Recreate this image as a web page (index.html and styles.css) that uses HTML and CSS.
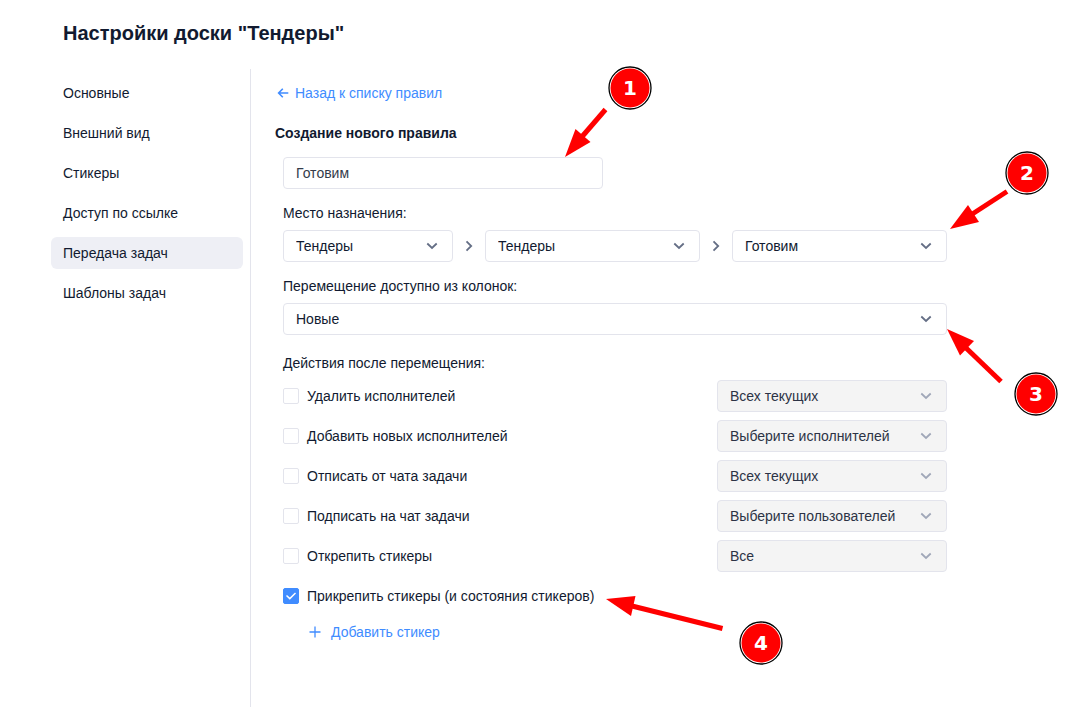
FILE: index.html
```html
<!DOCTYPE html>
<html lang="ru">
<head>
  <meta charset="UTF-8" />
  <meta name="viewport" content="width=device-width, initial-scale=1.0"/>
  <title>Настройки доски "Тендеры"</title>
  <link rel="stylesheet" href="styles.css">
</head>
<body>
  <!-- Shared icons -->
  <svg class="icons" aria-hidden="true">
    <symbol id="chevron" viewBox="0 0 12 12">
      <path d="M1.300 3.500 6 7.900l4.700-4.400" fill="none" stroke="currentColor" stroke-width="1.800"/>
    </symbol>
    <symbol id="angle" viewBox="0 0 12 12">
      <path d="M3.500 1.300 8.200 6l-4.700 4.700" fill="none" stroke="currentColor" stroke-width="1.800"/>
    </symbol>
  </svg>

  <div class="settings">
    <h1>Настройки доски "Тендеры"</h1>

    <div class="layout">
      <nav class="menu">
        <a href="#">Основные</a>
        <a href="#">Внешний вид</a>
        <a href="#">Стикеры</a>
        <a href="#">Доступ по ссылке</a>
        <a href="#" class="active">Передача задач</a>
        <a href="#">Шаблоны задач</a>
      </nav>

      <main class="content">
        <a href="#" class="back">
          <svg width="12" height="12" viewBox="0 0 12 12" fill="none" stroke="currentColor" stroke-width="1.600">
            <path d="M11.300 6H1.800M5.800 1.700 1.600 6l4.200 4.300"/>
          </svg>
          Назад к списку правил
        </a>
        <h2>Создание нового правила</h2>

        <form class="rule">
          <input type="text" class="rule-name" value="Готовим" aria-label="Название правила">

          <label class="field-label" for="project">Место назначения:</label>
          <div class="destination">
            <div class="select">
              <select id="project"><option>Тендеры</option></select>
              <svg><use href="#chevron"/></svg>
            </div>
            <svg class="separator"><use href="#angle"/></svg>
            <div class="select">
              <select aria-label="Доска"><option>Тендеры</option></select>
              <svg><use href="#chevron"/></svg>
            </div>
            <svg class="separator"><use href="#angle"/></svg>
            <div class="select">
              <select aria-label="Колонка"><option>Готовим</option></select>
              <svg><use href="#chevron"/></svg>
            </div>
          </div>

          <label class="field-label" for="source">Перемещение доступно из колонок:</label>
          <div class="select">
            <select id="source"><option>Новые</option></select>
            <svg><use href="#chevron"/></svg>
          </div>

          <p class="field-label actions-label">Действия после перемещения:</p>
          <div class="actions">
            <div class="action">
              <label><input type="checkbox">Удалить исполнителей</label>
              <div class="select">
                <select disabled aria-label="Удалить исполнителей"><option>Всех текущих</option></select>
                <svg><use href="#chevron"/></svg>
              </div>
            </div>
            <div class="action">
              <label><input type="checkbox">Добавить новых исполнителей</label>
              <div class="select">
                <select disabled aria-label="Добавить новых исполнителей"><option>Выберите исполнителей</option></select>
                <svg><use href="#chevron"/></svg>
              </div>
            </div>
            <div class="action">
              <label><input type="checkbox">Отписать от чата задачи</label>
              <div class="select">
                <select disabled aria-label="Отписать от чата задачи"><option>Всех текущих</option></select>
                <svg><use href="#chevron"/></svg>
              </div>
            </div>
            <div class="action">
              <label><input type="checkbox">Подписать на чат задачи</label>
              <div class="select">
                <select disabled aria-label="Подписать на чат задачи"><option>Выберите пользователей</option></select>
                <svg><use href="#chevron"/></svg>
              </div>
            </div>
            <div class="action">
              <label><input type="checkbox">Открепить стикеры</label>
              <div class="select">
                <select disabled aria-label="Открепить стикеры"><option>Все</option></select>
                <svg><use href="#chevron"/></svg>
              </div>
            </div>
            <div class="action">
              <label><input type="checkbox" checked>Прикрепить стикеры (и состояния стикеров)</label>
            </div>
          </div>

          <button type="button" class="add-sticker">
            <svg width="12" height="12" viewBox="0 0 12 12" fill="none" stroke="currentColor" stroke-width="1.300">
              <path d="M6 .5v11M.5 6h11"/>
            </svg>
            Добавить стикер
          </button>
        </form>
      </main>
    </div>

    <!-- Numbered callouts with arrows -->
    <svg class="callouts" width="1081" height="707" viewBox="0 0 1081 707">
      <g class="arrows">
        <path d="M605.500 109.500 580 139"/>
        <polygon points="565,157 575.500,129 590.500,142"/>
        <path d="M1007 191.500 970 215.500"/>
        <polygon points="950,229 968,205 979,222"/>
        <path d="M1001 381.500 964 346"/>
        <polygon points="947,329 960,355.500 974,341"/>
        <path d="M722.500 628.500 630 605.500"/>
        <polygon points="606,599 635.500,596 631,616"/>
      </g>
      <g class="badge">
        <circle class="ring" cx="630" cy="88" r="21"/><circle cx="630" cy="88" r="19.500"/>
        <text x="630" y="95">1</text>
      </g>
      <g class="badge">
        <circle class="ring" cx="1027" cy="173" r="21"/><circle cx="1027" cy="173" r="19.500"/>
        <text x="1027" y="180">2</text>
      </g>
      <g class="badge">
        <circle class="ring" cx="1036" cy="394" r="21"/><circle cx="1036" cy="394" r="19.500"/>
        <text x="1036" y="401">3</text>
      </g>
      <g class="badge">
        <circle class="ring" cx="761" cy="643" r="21"/><circle cx="761" cy="643" r="19.500"/>
        <text x="761" y="650">4</text>
      </g>
    </svg>
  </div>
</body>
</html>
```

FILE: styles.css
```css
* {
  box-sizing: border-box;
}

body {
  margin: 0;
  background: #fff;
  color: #111a30;
  font-family: "Liberation Sans", Arial, sans-serif;
  font-size: 14px;
  line-height: 20px;
}

a {
  color: inherit;
  text-decoration: none;
}

.icons {
  display: none;
}

.settings {
  position: relative;
  display: flex;
  flex-direction: column;
  min-height: 100vh;
  overflow: hidden;
}

h1 {
  margin: 0;
  padding: 21px 63px 24px;
  font-size: 20px;
  line-height: 24px;
}

.layout {
  display: flex;
  flex: 1;
  padding-left: 51px;
}

/* Left menu */
.menu {
  display: flex;
  flex-direction: column;
  flex: none;
  gap: 8px;
  width: 192px;
  margin-right: 7px;
  padding-top: 8px;
}

.menu a {
  padding: 6px 12px;
  border-radius: 6px;
}

.menu .active {
  background: #eeeff5;
}

/* Rule form */
.content {
  flex: 1;
  padding: 8px 24px;
  border-left: 1px solid #e3e4ec;
}

.back,
.add-sticker {
  display: flex;
  align-items: center;
  width: max-content;
  height: 32px;
  color: #408cff;
}

.back {
  gap: 6px;
  padding-left: 2px;
}

h2 {
  margin: 8px 0;
  font-size: 14px;
  line-height: 32px;
}

.rule {
  max-width: 680px;
  padding: 0 8px;
}

.rule-name,
select {
  display: block;
  width: 100%;
  height: 32px;
  padding: 0 12px;
  border: 1px solid #e3e4ec;
  border-radius: 4px;
  background: #fff;
  color: #111a30;
  font: inherit;
}

.rule-name {
  max-width: 320px;
  color: #333b4a;
}

.field-label {
  display: block;
  margin: 14px 0 7px;
}

.actions-label {
  margin-top: 18px;
}

.select {
  position: relative;
}

.select svg {
  position: absolute;
  top: 10px;
  right: 15px;
  width: 12px;
  height: 12px;
  color: #646e85;
  pointer-events: none;
}

select {
  appearance: none;
}

select:disabled {
  background: #f4f4f4;
  color: #2c3345;
  opacity: 1;
}

.select select:disabled + svg {
  color: #a0a7b8;
}

.destination {
  display: grid;
  grid-template-columns: 170px 32px 1fr 32px 1fr;
  align-items: center;
}

.separator {
  width: 12px;
  height: 12px;
  margin: 0 auto;
  color: #646e85;
}

.actions {
  display: flex;
  flex-direction: column;
  gap: 8px;
}

.action {
  display: flex;
  align-items: center;
  justify-content: space-between;
  height: 32px;
}

.action label {
  display: flex;
  align-items: center;
  gap: 8px;
}

.action .select {
  width: 230px;
}

input[type="checkbox"] {
  appearance: none;
  display: grid;
  place-items: center;
  width: 16px;
  height: 16px;
  margin: 0;
  border: 1px solid #e3e4ec;
  border-radius: 2px;
  background: #fff;
}

input[type="checkbox"]:checked {
  border-color: #408cff;
  background: #408cff;
}

input[type="checkbox"]:checked::before {
  content: "";
  width: 10px;
  height: 8px;
  background: #fff;
  clip-path: polygon(0 50%, 10% 36%, 38% 70%, 90% 6%, 100% 20%, 38% 96%);
}

.add-sticker {
  gap: 10px;
  margin: 4px 0 0 26px;
  padding: 0;
  border: none;
  background: none;
  font: inherit;
  cursor: pointer;
}

/* Callouts drawn over the form */
.callouts {
  position: absolute;
  top: 0;
  left: 0;
  pointer-events: none;
}

.arrows {
  fill: #f00;
}

.arrows path {
  stroke: #f00;
  stroke-width: 5px;
}

.badge circle {
  fill: #f00;
}

.badge .ring {
  fill: #fff;
  stroke: #000;
  stroke-width: 1.3px;
}

.badge text {
  fill: #fff;
  font: bold 20px "DejaVu Sans", sans-serif;
  text-anchor: middle;
}
```
